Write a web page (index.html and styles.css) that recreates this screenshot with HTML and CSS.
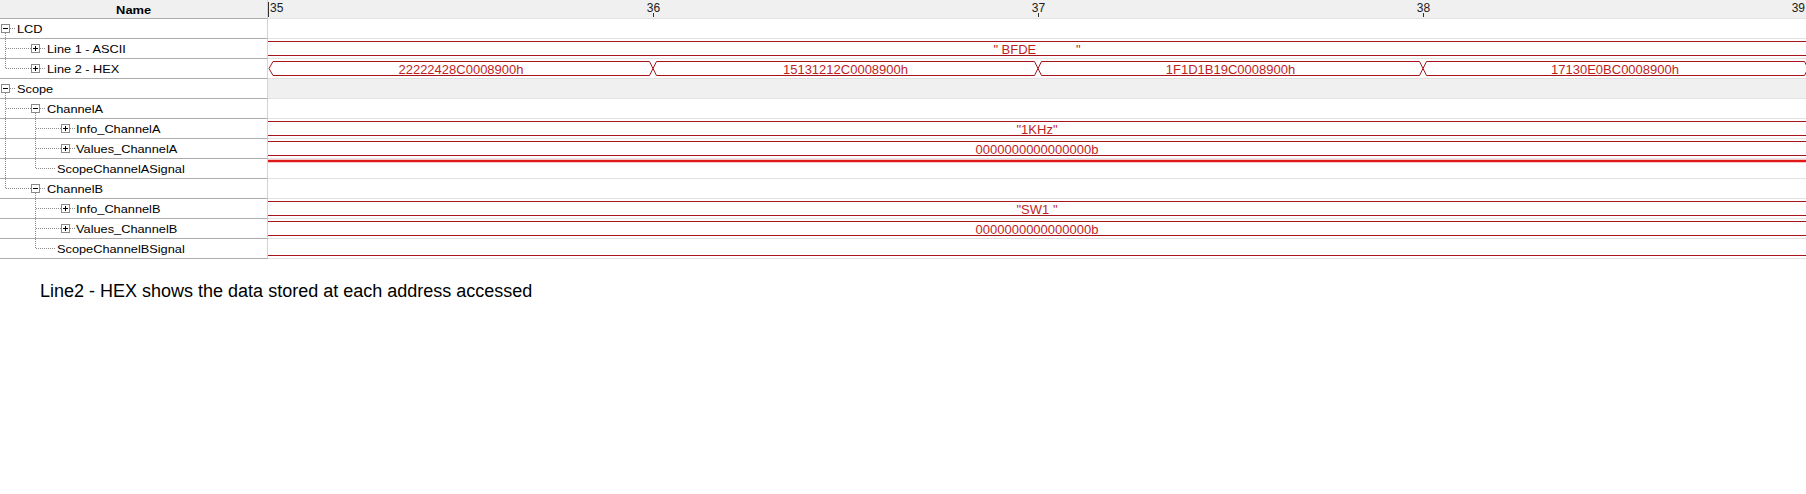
FILE: index.html
```html
<!DOCTYPE html>
<html>
<head>
<meta charset="utf-8">
<title>Waveform</title>
<link rel="stylesheet" href="styles.css">
</head>
<body>
<div class="wave-view">
  <div class="header">
    <div class="name-head"><span class="head-label">Name</span></div>
    <svg class="timeline" width="1538" height="18" viewBox="0 0 1538 18">
      <path class="tick" d="M0.5 2V17M385.5 13V17M770.5 13V17M1155.5 13V17"/>
      <text class="tl-text" x="2" y="12">35</text>
      <text class="tl-text" x="385.5" y="12" text-anchor="middle">36</text>
      <text class="tl-text" x="770.5" y="12" text-anchor="middle">37</text>
      <text class="tl-text" x="1155.5" y="12" text-anchor="middle">38</text>
      <text class="tl-text" x="1537" y="12" text-anchor="end">39</text>
    </svg>
  </div>

  <!-- LCD -->
  <div class="row">
    <div class="name-cell">
      <svg class="tree" width="17" height="19">
        <path class="dot" d="M5.5 14V19M10 9.5H16"/>
        <rect class="box" x="1.5" y="5.5" width="8" height="8"/>
        <path class="sign" d="M3 9.5H8"/>
      </svg>
      <span class="label">LCD</span>
    </div>
    <div class="wave-cell"></div>
  </div>

  <!-- Line 1 - ASCII -->
  <div class="row">
    <div class="name-cell">
      <svg class="tree" width="47" height="19">
        <path class="dot" d="M5.5 0V19M6 9.5H31M40 9.5H46"/>
        <rect class="box" x="31.5" y="5.5" width="8" height="8"/>
        <path class="sign" d="M33 9.5H38M35.5 7V12"/>
      </svg>
      <span class="label">Line 1 - ASCII</span>
    </div>
    <div class="wave-cell">
      <svg class="wave" width="1538" height="19" viewBox="0 0 1538 19">
        <path class="bus" d="M0 2.5H1538M0 16.5H1538"/>
        <text class="bus-text" x="769" y="15" text-anchor="middle" xml:space="preserve">" BFDE           "</text>
      </svg>
    </div>
  </div>

  <!-- Line 2 - HEX -->
  <div class="row">
    <div class="name-cell">
      <svg class="tree" width="47" height="19">
        <path class="dot" d="M5.5 0V9.5M6 9.5H31M40 9.5H46"/>
        <rect class="box" x="31.5" y="5.5" width="8" height="8"/>
        <path class="sign" d="M33 9.5H38M35.5 7V12"/>
      </svg>
      <span class="label">Line 2 - HEX</span>
    </div>
    <div class="wave-cell">
      <svg class="wave" width="1538" height="19" viewBox="0 0 1538 19">
        <polygon class="bus" points="5,2.5 381.5,2.5 385,9.5 381.5,16.5 5,16.5 1,9.5"/>
        <polygon class="bus" points="388.5,2.5 766.5,2.5 770,9.5 766.5,16.5 388.5,16.5 385,9.5"/>
        <polygon class="bus" points="773.5,2.5 1151.5,2.5 1155,9.5 1151.5,16.5 773.5,16.5 770,9.5"/>
        <polygon class="bus" points="1158.5,2.5 1536.5,2.5 1540,9.5 1536.5,16.5 1158.5,16.5 1155,9.5"/>
        <text class="bus-text" x="193" y="15" text-anchor="middle">22222428C0008900h</text>
        <text class="bus-text" x="577.5" y="15" text-anchor="middle">15131212C0008900h</text>
        <text class="bus-text" x="962.5" y="15" text-anchor="middle">1F1D1B19C0008900h</text>
        <text class="bus-text" x="1347" y="15" text-anchor="middle">17130E0BC0008900h</text>
      </svg>
    </div>
  </div>

  <!-- Scope -->
  <div class="row">
    <div class="name-cell">
      <svg class="tree" width="17" height="19">
        <path class="dot" d="M5.5 14V19M10 9.5H16"/>
        <rect class="box" x="1.5" y="5.5" width="8" height="8"/>
        <path class="sign" d="M3 9.5H8"/>
      </svg>
      <span class="label">Scope</span>
    </div>
    <div class="wave-cell hl"></div>
  </div>

  <!-- ChannelA -->
  <div class="row">
    <div class="name-cell">
      <svg class="tree" width="47" height="19">
        <path class="dot" d="M5.5 0V19M6 9.5H31M40 9.5H46M35.5 14V19"/>
        <rect class="box" x="31.5" y="5.5" width="8" height="8"/>
        <path class="sign" d="M33 9.5H38"/>
      </svg>
      <span class="label">ChannelA</span>
    </div>
    <div class="wave-cell"></div>
  </div>

  <!-- Info_ChannelA -->
  <div class="row">
    <div class="name-cell">
      <svg class="tree" width="76" height="19">
        <path class="dot" d="M5.5 0V19M35.5 0V19M36 9.5H61M70 9.5H75"/>
        <rect class="box" x="61.5" y="5.5" width="8" height="8"/>
        <path class="sign" d="M63 9.5H68M65.5 7V12"/>
      </svg>
      <span class="label">Info_ChannelA</span>
    </div>
    <div class="wave-cell">
      <svg class="wave" width="1538" height="19" viewBox="0 0 1538 19">
        <path class="bus" d="M0 2.5H1538M0 16.5H1538"/>
        <text class="bus-text" x="769" y="15" text-anchor="middle">"1KHz"</text>
      </svg>
    </div>
  </div>

  <!-- Values_ChannelA -->
  <div class="row">
    <div class="name-cell">
      <svg class="tree" width="76" height="19">
        <path class="dot" d="M5.5 0V19M35.5 0V19M36 9.5H61M70 9.5H75"/>
        <rect class="box" x="61.5" y="5.5" width="8" height="8"/>
        <path class="sign" d="M63 9.5H68M65.5 7V12"/>
      </svg>
      <span class="label">Values_ChannelA</span>
    </div>
    <div class="wave-cell">
      <svg class="wave" width="1538" height="19" viewBox="0 0 1538 19">
        <path class="bus" d="M0 2.5H1538M0 16.5H1538"/>
        <text class="bus-text" x="769" y="15" text-anchor="middle">0000000000000000b</text>
      </svg>
    </div>
  </div>

  <!-- ScopeChannelASignal -->
  <div class="row">
    <div class="name-cell">
      <svg class="tree" width="57" height="19">
        <path class="dot" d="M5.5 0V19M35.5 0V9.5M36 9.5H56"/>
      </svg>
      <span class="label">ScopeChannelASignal</span>
    </div>
    <div class="wave-cell">
      <svg class="wave" width="1538" height="19" viewBox="0 0 1538 19">
        <path class="sig-hi" d="M0 2H1538"/>
      </svg>
    </div>
  </div>

  <!-- ChannelB -->
  <div class="row">
    <div class="name-cell">
      <svg class="tree" width="47" height="19">
        <path class="dot" d="M5.5 0V9.5M6 9.5H31M40 9.5H46M35.5 14V19"/>
        <rect class="box" x="31.5" y="5.5" width="8" height="8"/>
        <path class="sign" d="M33 9.5H38"/>
      </svg>
      <span class="label">ChannelB</span>
    </div>
    <div class="wave-cell"></div>
  </div>

  <!-- Info_ChannelB -->
  <div class="row">
    <div class="name-cell">
      <svg class="tree" width="76" height="19">
        <path class="dot" d="M35.5 0V19M36 9.5H61M70 9.5H75"/>
        <rect class="box" x="61.5" y="5.5" width="8" height="8"/>
        <path class="sign" d="M63 9.5H68M65.5 7V12"/>
      </svg>
      <span class="label">Info_ChannelB</span>
    </div>
    <div class="wave-cell">
      <svg class="wave" width="1538" height="19" viewBox="0 0 1538 19">
        <path class="bus" d="M0 2.5H1538M0 16.5H1538"/>
        <text class="bus-text" x="769" y="15" text-anchor="middle" xml:space="preserve">"SW1 "</text>
      </svg>
    </div>
  </div>

  <!-- Values_ChannelB -->
  <div class="row">
    <div class="name-cell">
      <svg class="tree" width="76" height="19">
        <path class="dot" d="M35.5 0V19M36 9.5H61M70 9.5H75"/>
        <rect class="box" x="61.5" y="5.5" width="8" height="8"/>
        <path class="sign" d="M63 9.5H68M65.5 7V12"/>
      </svg>
      <span class="label">Values_ChannelB</span>
    </div>
    <div class="wave-cell">
      <svg class="wave" width="1538" height="19" viewBox="0 0 1538 19">
        <path class="bus" d="M0 2.5H1538M0 16.5H1538"/>
        <text class="bus-text" x="769" y="15" text-anchor="middle">0000000000000000b</text>
      </svg>
    </div>
  </div>

  <!-- ScopeChannelBSignal -->
  <div class="row last">
    <div class="name-cell">
      <svg class="tree" width="57" height="19">
        <path class="dot" d="M35.5 0V9.5M36 9.5H56"/>
      </svg>
      <span class="label">ScopeChannelBSignal</span>
    </div>
    <div class="wave-cell">
      <svg class="wave" width="1538" height="19" viewBox="0 0 1538 19">
        <path class="sig-lo" d="M0 16.5H1538"/>
      </svg>
    </div>
  </div>
</div>

<p class="caption">Line2 - HEX shows the data stored at each address accessed</p>
</body>
</html>
```

FILE: styles.css
```css
html, body {
  margin: 0;
  padding: 0;
  background: #ffffff;
}

body {
  font-family: "Liberation Sans", Arial, sans-serif;
  color: #000;
}

.wave-view {
  width: 1806px;
  display: flex;
  flex-direction: column;
}

.header {
  display: flex;
  height: 18px;
  background: #f0f0f0;
}

.name-head {
  width: 268px;
  box-sizing: border-box;
  border-right: 1px solid #d4d4d4;
  display: flex;
  justify-content: center;
  height: 18px;
  overflow: hidden;
}

.head-label {
  font-weight: bold;
  font-size: 11.5px;
  line-height: 20px;
  transform: scaleX(1.12);
  transform-origin: center;
}

.timeline {
  display: block;
  flex: none;
}

.tick {
  stroke: #303030;
  stroke-width: 1;
  fill: none;
}

.tl-text {
  font-family: "Liberation Sans", Arial, sans-serif;
  font-size: 12px;
  fill: #202020;
}

.row {
  display: flex;
  height: 20px;
}

.name-cell {
  width: 268px;
  box-sizing: border-box;
  height: 20px;
  border-top: 1px solid #acacac;
  border-right: 1px solid #d4d4d4;
  display: flex;
  align-items: flex-start;
  overflow: hidden;
  background: #ffffff;
}

.wave-cell {
  flex: 1;
  box-sizing: border-box;
  height: 20px;
  border-top: 1px solid #e2e2e2;
  overflow: hidden;
  background: #ffffff;
}

.wave-cell.hl {
  background: #f0f0f0;
}

.row.last {
  height: 21px;
}

.row.last .name-cell {
  height: 21px;
  border-bottom: 1px solid #acacac;
}

.row.last .wave-cell {
  height: 21px;
  border-bottom: 1px solid #e2e2e2;
}

.tree {
  display: block;
  flex: none;
}

.dot {
  stroke: #8c8c8c;
  stroke-width: 1;
  stroke-dasharray: 1 1;
  fill: none;
}

.box {
  fill: #ffffff;
  stroke: #8a8a8a;
  stroke-width: 1;
}

.sign {
  stroke: #000000;
  stroke-width: 1;
  fill: none;
}

.label {
  display: block;
  font-size: 11.5px;
  line-height: 21px;
  white-space: nowrap;
  transform: scaleX(1.11);
  transform-origin: left center;
  color: #000;
}

.wave {
  display: block;
}

.bus {
  fill: none;
  stroke: #a8141c;
  stroke-width: 1;
}

.bus-text {
  font-family: "Liberation Sans", Arial, sans-serif;
  font-size: 13px;
  fill: #c01e1e;
  white-space: pre;
}

.sig-hi {
  stroke: #e01818;
  stroke-width: 2.6;
  fill: none;
}

.sig-lo {
  stroke: #a8141c;
  stroke-width: 1;
  fill: none;
}

.caption {
  margin: 21px 0 0 40px;
  font-size: 18px;
  line-height: 22px;
  color: #000;
}
```
